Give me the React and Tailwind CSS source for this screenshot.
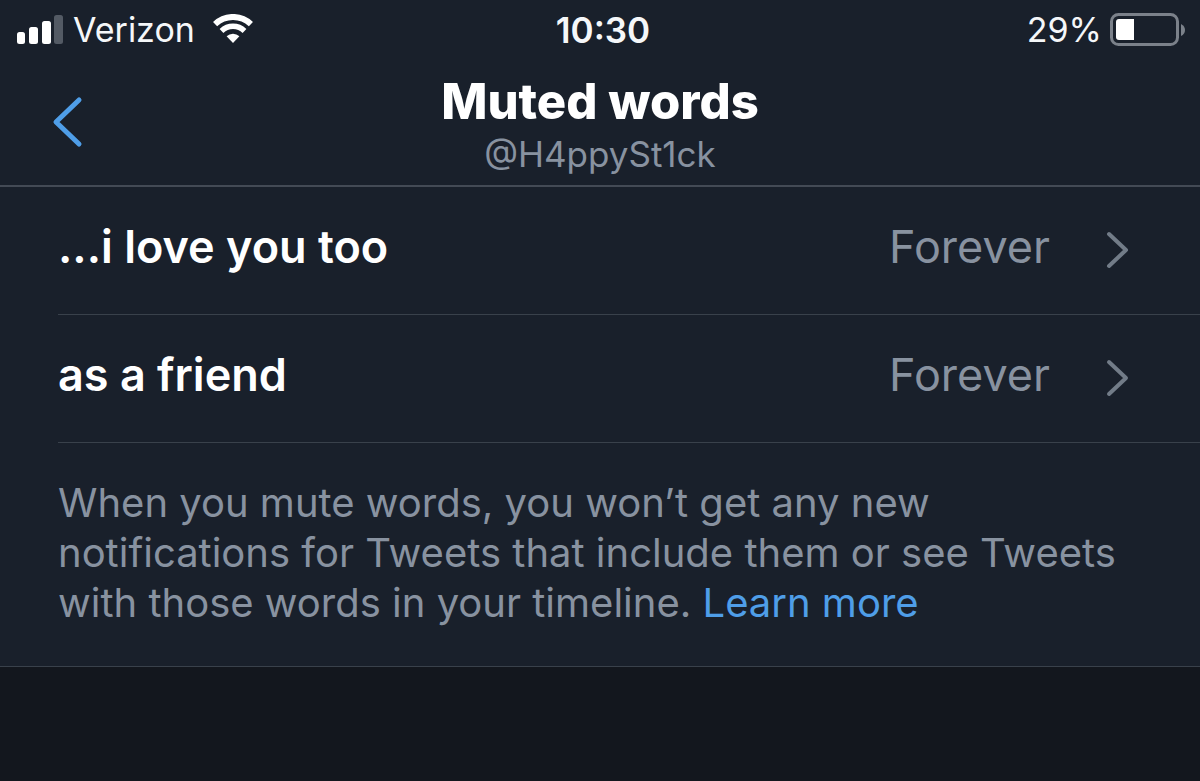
const mutedWords = [
  { id: 1, word: "...i love you too", duration: "Forever" },
  { id: 2, word: "as a friend", duration: "Forever" },
];

function SignalIcon() {
  return (
    <svg width="47" height="30" viewBox="0 0 47 30" fill="#fff" aria-hidden="true">
      <rect x="1" y="17" width="8" height="12" rx="2.5" />
      <rect x="13" y="12" width="9" height="17" rx="2.5" />
      <rect x="26" y="6" width="9" height="23" rx="2.5" />
      <rect x="38" y="0" width="9" height="29" rx="2.5" fill="#535a64" />
    </svg>
  );
}

function WifiIcon() {
  return (
    <svg width="40" height="30" viewBox="0 0 40 30" fill="none" stroke="#fff" aria-hidden="true">
      <path d="M2.1 10.1 A26 26 0 0 1 37.9 10.1" strokeWidth="6" />
      <path d="M8.5 16.9 A16.7 16.7 0 0 1 31.5 16.9" strokeWidth="5.5" />
      <path d="M20 29 L13.6 22.3 A9.2 9.2 0 0 1 26.4 22.3 Z" fill="#fff" stroke="none" />
    </svg>
  );
}

function BatteryIcon() {
  return (
    <svg width="76" height="34" viewBox="0 0 76 34" fill="none" aria-hidden="true">
      <rect x="1.5" y="1.5" width="66" height="30" rx="7" stroke="#7b818a" strokeWidth="3" />
      <path d="M9 6 H24 V27 H9 Q6 27 6 24 V9 Q6 6 9 6 Z" fill="#fff" />
      <path d="M71 11 Q75 13 75 17 Q75 21 71 23 Z" fill="#7b818a" />
    </svg>
  );
}

function StatusBar() {
  return (
    <div className="grid h-15 grid-cols-[1fr_auto_1fr] items-center pr-3.5 pl-4 text-[34px] leading-10 text-[#f5f7f9]">
      <div className="flex items-center gap-2.5">
        <SignalIcon />
        <span>Verizon</span>
        <span className="pb-0.5 pl-2">
          <WifiIcon />
        </span>
      </div>
      <span className="pl-1 text-[35px] font-semibold">10:30</span>
      <div className="flex items-center justify-end gap-2">
        <span>29%</span>
        <BatteryIcon />
      </div>
    </div>
  );
}

function Header() {
  return (
    <header className="grid grid-cols-[1fr_auto_1fr] items-center border-b-2 border-[#434a55] pt-3 pb-[9px]">
      <button type="button" aria-label="Back" className="mb-1 ml-12 w-fit cursor-pointer">
        <svg width="40" height="56" viewBox="0 0 40 56" fill="none">
          <path
            d="M31 6 L8 28 L31 50"
            stroke="#4f9ee8"
            strokeWidth="5"
            strokeLinecap="round"
            strokeLinejoin="round"
          />
        </svg>
      </button>
      <div className="text-center">
        <h1 className="text-[49px] leading-[60px] font-extrabold text-white">Muted words</h1>
        <p className="text-[35px] leading-[44px] text-[#8892a0]">@H4ppySt1ck</p>
      </div>
    </header>
  );
}

function MutedWordRow({ word, duration }) {
  return (
    <li className="border-b border-[#39414b]">
      <button
        type="button"
        className="flex h-[127px] w-full cursor-pointer items-center pr-17 pb-2 text-left text-[45px] leading-[56px]"
      >
        <span className="flex-1 font-semibold text-white">{word}</span>
        <span className="text-[#8892a0]">{duration}</span>
        <svg className="mt-1.5 ml-[50px]" width="32" height="44" viewBox="0 0 32 44" fill="none" aria-hidden="true">
          <path
            d="M9 6 L26 22 L9 38"
            stroke="#727c88"
            strokeWidth="4"
            strokeLinecap="round"
            strokeLinejoin="round"
          />
        </svg>
      </button>
    </li>
  );
}

export default function App() {
  return (
    <div className="min-h-screen bg-[#13171e] font-['Inter',sans-serif]">
      <div className="border-b border-[#39414b] bg-[#19202b]">
        <StatusBar />
        <Header />
        <main>
          <ul className="pl-[58px]">
            {mutedWords.map((item) => (
              <MutedWordRow key={item.id} word={item.word} duration={item.duration} />
            ))}
          </ul>
          <p className="pt-[35px] pr-20 pb-[38px] pl-[58px] text-[40px] leading-[50px] text-[#8892a0]">
            When you mute words, you won’t get any new notifications for Tweets that include them or see
            Tweets with those words in your timeline.{" "}
            <a href="#learn-more" className="inline-block text-[#4f9ee8]">
              Learn more
            </a>
          </p>
        </main>
      </div>
    </div>
  );
}
